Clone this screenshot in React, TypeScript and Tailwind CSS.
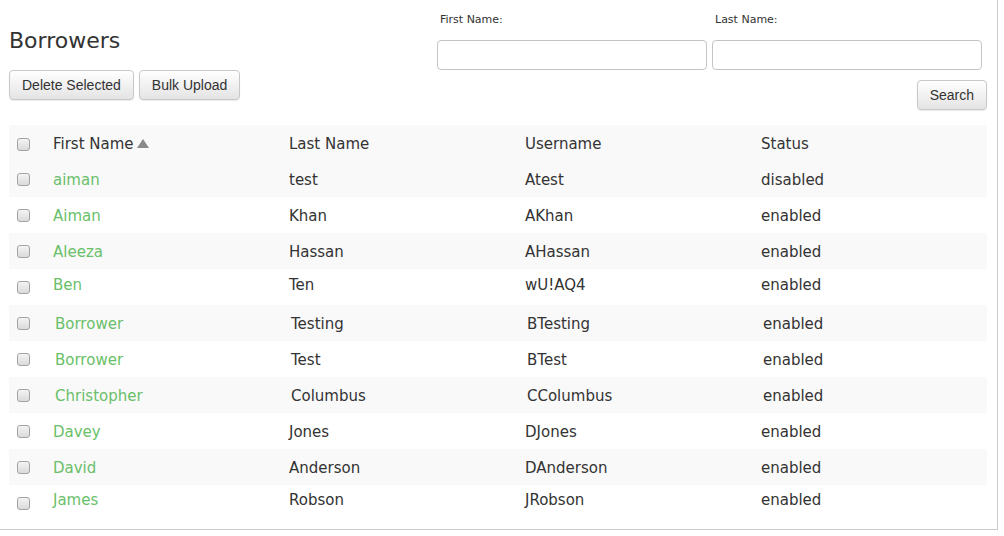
import React from "react";

type Borrower = {
  first: string;
  last: string;
  username: string;
  status: string;
  pad?: string;
  lift?: string;
};

const borrowers: Borrower[] = [
  { first: "aiman", last: "test", username: "Atest", status: "disabled" },
  { first: "Aiman", last: "Khan", username: "AKhan", status: "enabled" },
  { first: "Aleeza", last: "Hassan", username: "AHassan", status: "enabled" },
  { first: "Ben", last: "Ten", username: "wU!AQ4", status: "enabled", lift: "pb-[4px]" },
  { first: "Borrower", last: "Testing", username: "BTesting", status: "enabled", pad: "pl-[10px]" },
  { first: "Borrower", last: "Test", username: "BTest", status: "enabled", pad: "pl-[10px]" },
  { first: "Christopher", last: "Columbus", username: "CColumbus", status: "enabled", pad: "pl-[10px]" },
  { first: "Davey", last: "Jones", username: "DJones", status: "enabled" },
  { first: "David", last: "Anderson", username: "DAnderson", status: "enabled" },
  { first: "James", last: "Robson", username: "JRobson", status: "enabled", lift: "pb-[6px]" },
];

const font = { fontFamily: '"DejaVu Sans", sans-serif' };

function Checkbox() {
  return (
    <span className="block h-[13px] w-[13px] rounded-[3px] border border-[#a3a3a3] bg-gradient-to-b from-[#f4f4f4] to-[#dadada]" />
  );
}

function Button({ children }: { children: React.ReactNode }) {
  return (
    <button
      className="h-[30px] rounded-[4px] border border-[#c8c8c8] bg-gradient-to-b from-white to-[#e4e4e4] px-[12px] text-[14px] text-[#333] shadow-[0_1px_1px_rgba(0,0,0,0.08)]"
      style={{ fontFamily: '"Liberation Sans", Arial, sans-serif' }}
    >
      {children}
    </button>
  );
}

export default function App() {
  return (
    <div
      className="h-[530px] w-[998px] border-b border-r border-[#cccccc] bg-white pl-[9px] pr-[10px] text-[#333]"
      style={font}
    >
      <div className="flex justify-between">
        <div className="pt-[28px]">
          <h1 className="text-[22px] leading-[26px] text-[#333]">Borrowers</h1>
          <div className="mt-[16px] flex gap-[5px]">
            <Button>Delete Selected</Button>
            <Button>Bulk Upload</Button>
          </div>
        </div>

        <div className="w-[550px]">
          <div className="grid grid-cols-[270px_270px] gap-x-[5px]">
            <label className="pl-[3px] pt-[13px] text-[11px] leading-[14px]">First Name:</label>
            <label className="pl-[3px] pt-[13px] text-[11px] leading-[14px]">Last Name:</label>
            <input className="mt-[13px] h-[30px] rounded-[4px] border border-[#c4c4c4] bg-white px-2 outline-none" />
            <input className="mt-[13px] h-[30px] rounded-[4px] border border-[#c4c4c4] bg-white px-2 outline-none" />
          </div>
          <div className="mt-[10px] flex justify-end">
            <Button>Search</Button>
          </div>
        </div>
      </div>

      <div className="mt-[15px] text-[15px]">
        <div className="grid h-[36px] grid-cols-[36px_236px_236px_236px_1fr] items-center bg-[#f9f9f9] pt-[2px]">
          <div className="pl-[8px]">
            <Checkbox />
          </div>
          <div className="flex items-center gap-[3px] pl-[8px]">
            <span>First Name</span>
            <svg width="12" height="9" viewBox="0 0 12 9" className="mt-[-1px]">
              <polygon points="6,0 12,9 0,9" fill="#8a8a8a" />
            </svg>
          </div>
          <div className="pl-[8px]">Last Name</div>
          <div className="pl-[8px]">Username</div>
          <div className="pl-[8px]">Status</div>
        </div>

        {borrowers.map((b, i) => {
          const cell = `${b.pad ?? "pl-[8px]"} ${b.lift ?? "pt-[2px]"}`;
          return (
            <div
              key={i}
              className={`grid h-[36px] grid-cols-[36px_236px_236px_236px_1fr] items-center ${
                i % 2 === 0 ? "bg-[#f9f9f9]" : "bg-white"
              }`}
            >
              <div className="pl-[8px]">
                <Checkbox />
              </div>
              <div className={`${cell} text-[#6abf69]`}>{b.first}</div>
              <div className={cell}>{b.last}</div>
              <div className={cell}>{b.username}</div>
              <div className={cell}>{b.status}</div>
            </div>
          );
        })}
      </div>
    </div>
  );
}
